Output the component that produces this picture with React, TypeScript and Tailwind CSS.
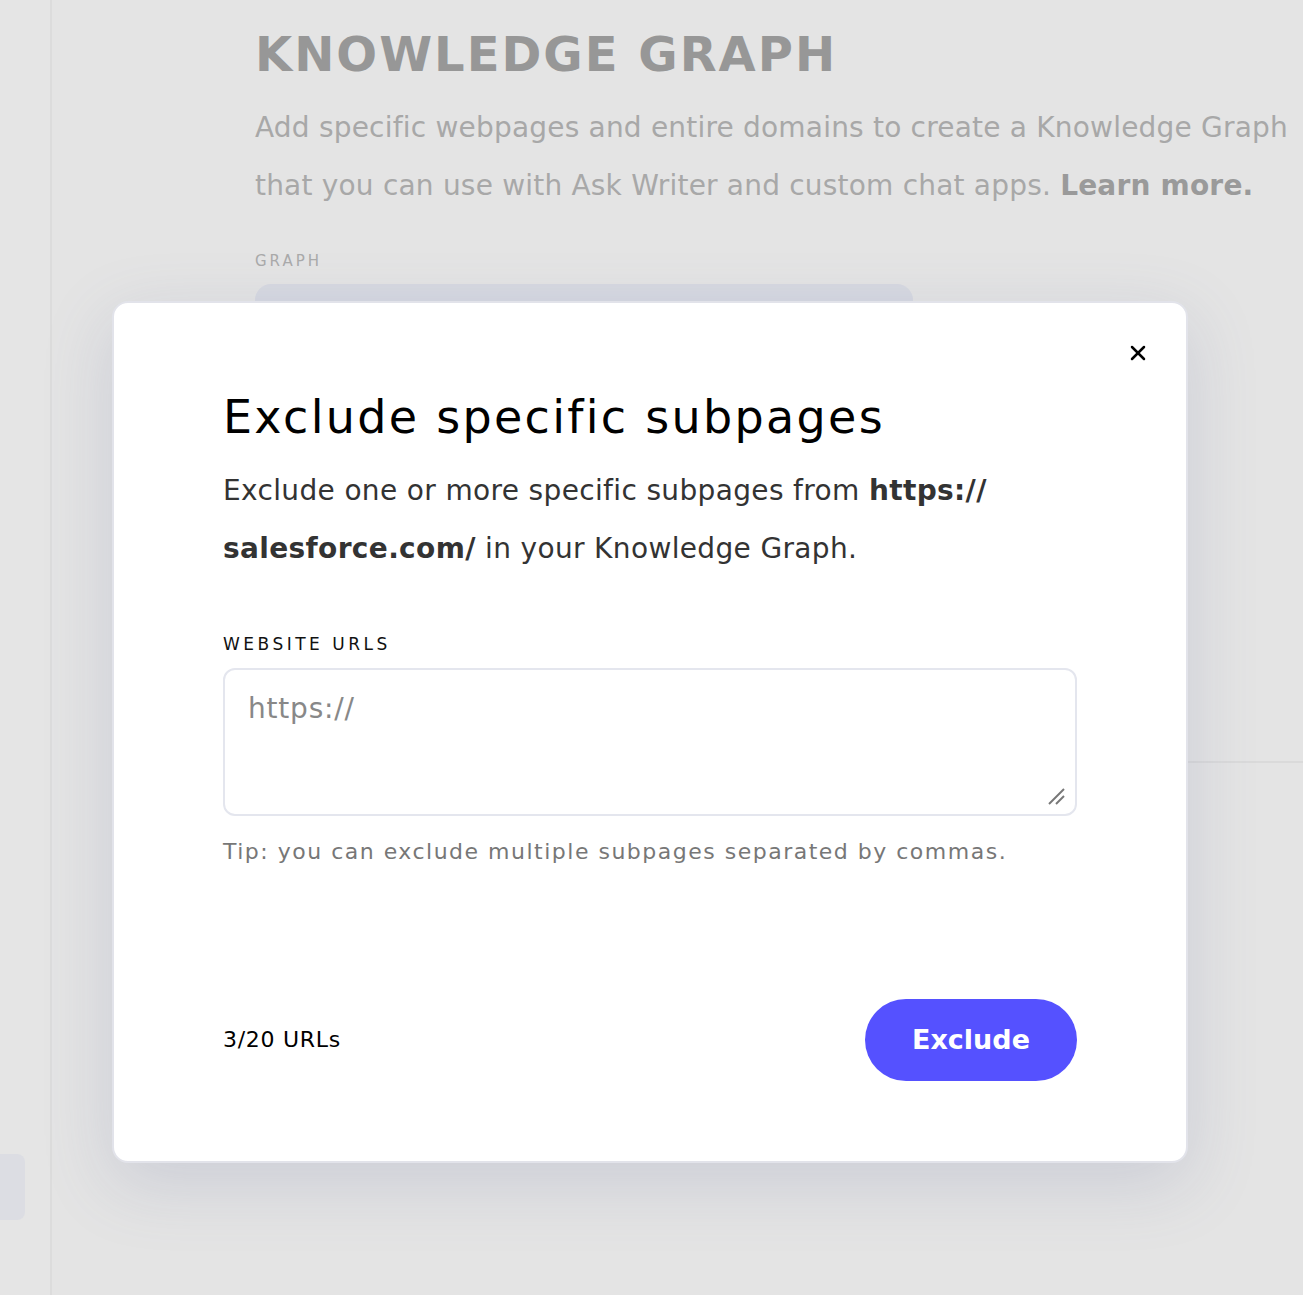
import React, { useState } from 'react';
import { X as CloseIcon } from 'lucide-react';

const font = { fontFamily: '"DejaVu Sans", "Open Sans", sans-serif' };

function BackgroundPage() {
  return (
    <div className="flex h-full w-full bg-[#e4e4e4]">
      {/* Sidebar */}
      <div className="flex h-full w-[52px] shrink-0 flex-col justify-end border-r-2 border-[#dcdcdc] bg-[#e5e5e5] pb-[75px]">
        <div className="h-[66px] w-[25px] rounded-r-lg bg-[#dcdde3]" />
      </div>

      {/* Main */}
      <div className="flex min-w-0 flex-1 flex-col">
        <div className="-mt-[17px] pl-[203px]">
          <p className="text-[15px] leading-[22px] tracking-[2.5px] text-[#a3a3a3]">MARKETING</p>
          <h1 className="mt-[14px] text-[48px] font-semibold leading-[70px] tracking-[2px] text-[#979797]">
            KNOWLEDGE GRAPH
          </h1>
          <p className="mt-[10px] whitespace-nowrap text-[28px] leading-[58px] tracking-[0.2px] text-[#a8a8a8]">
            Add specific webpages and entire domains to create a Knowledge Graph
            <br />
            that you can use with Ask Writer and custom chat apps.{' '}
            <span className="font-semibold text-[#9a9a9a]">Learn more.</span>
          </p>
          <p className="mt-[35px] text-[15px] leading-[22px] tracking-[3px] text-[#aaaaaa]">GRAPH</p>
          <div className="mt-[12px] h-[60px] w-[658px] rounded-2xl bg-[#d7d9e1]" />
        </div>
        <div className="ml-auto mt-[417px] h-[2px] w-[200px] bg-[#dadada]" />
      </div>
    </div>
  );
}

export default function App() {
  const [urls, setUrls] = useState('');

  return (
    <div className="relative h-[1295px] w-full overflow-hidden" style={font}>
      <BackgroundPage />

      {/* Modal */}
      <div className="absolute left-[112px] top-[301px] w-[1076px] rounded-2xl border-2 border-[#e2e3ea] bg-white px-[109px] pb-[80px] pt-[86px] shadow-[0_20px_70px_rgba(90,100,150,0.18)]">
        <button className="absolute right-[36px] top-[38px] flex h-[24px] w-[24px] items-center justify-center text-black">
          <CloseIcon className="h-[24px] w-[24px]" strokeWidth={2.5} />
        </button>

        <h2 className="text-[46px] leading-[56px] tracking-[2.3px] text-black">Exclude specific subpages</h2>
        <p className="mt-[17px] text-[28px] leading-[58px] tracking-[0.35px] text-[#333333]">
          Exclude one or more specific subpages from <span className="font-semibold">https://</span>
          <br />
          <span className="font-semibold">salesforce.com/</span> in your Knowledge Graph.
        </p>

        <label className="mt-[54px] block text-[17px] leading-[24px] tracking-[3.5px] text-[#111111]">
          WEBSITE URLS
        </label>
        <div className="relative mt-[12px]">
          <textarea
            value={urls}
            onChange={(e) => setUrls(e.target.value)}
            placeholder="https://"
            className="block h-[148px] w-full resize-none rounded-xl border-2 border-[#e4e6ee] px-[23px] py-[19px] text-[28px] leading-[40px] tracking-[0.8px] text-[#333] outline-none placeholder:text-[#888888]"
          />
          <svg
            className="pointer-events-none absolute bottom-[10px] right-[10px] h-[20px] w-[20px]"
            viewBox="0 0 20 20"
            fill="none"
            stroke="#777"
            strokeWidth="2"
          >
            <line x1="2" y1="18" x2="17" y2="3" />
            <line x1="9" y1="18" x2="17" y2="10" />
          </svg>
        </div>
        <p className="mt-[21px] text-[22px] leading-[30px] tracking-[1.5px] text-[#777777]">
          Tip: you can exclude multiple subpages separated by commas.
        </p>

        <div className="mt-[132px] flex items-center justify-between">
          <span className="text-[22px] leading-[30px] tracking-[0.7px] text-black">3/20 URLs</span>
          <button className="h-[82px] w-[212px] rounded-full bg-[#5551ff] text-[27px] font-semibold text-white">
            Exclude
          </button>
        </div>
      </div>
    </div>
  );
}
